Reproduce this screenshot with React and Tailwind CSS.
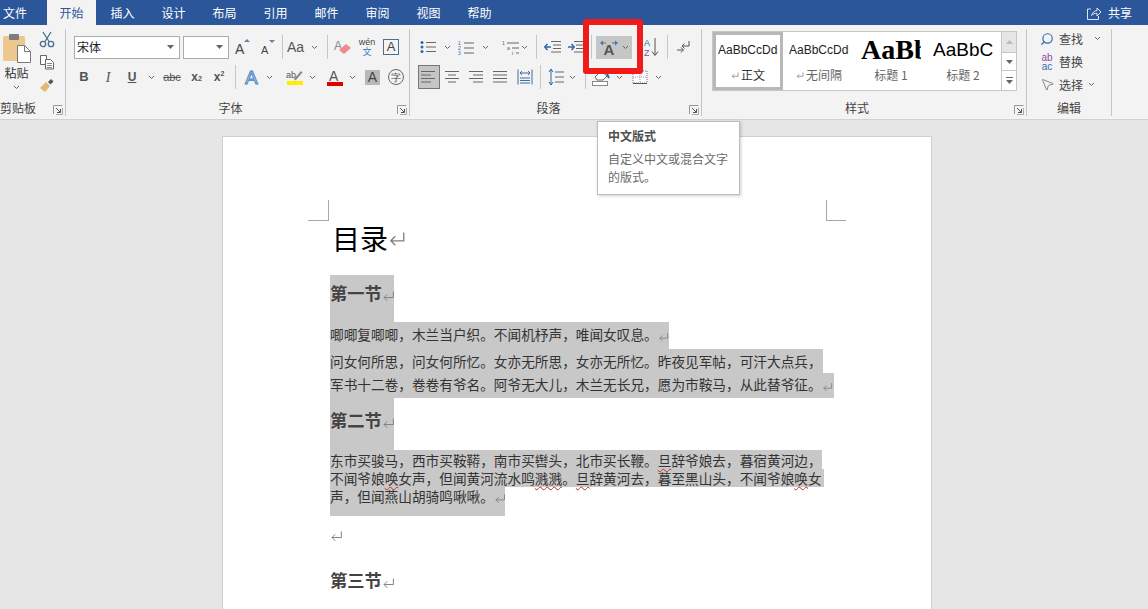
import React from "react";
import { Search, MousePointer2 } from "lucide-react";

const Svg = ({ w = 16, h = 16, children }) => (
  <svg width={w} height={h} viewBox={`0 0 ${w} ${h}`} fill="none" className="block shrink-0">{children}</svg>
);
const I = ({ c = "", children }) => <div className={"flex shrink-0 items-center justify-center " + c}>{children}</div>;
const Caret = ({ c = "" }) => (
  <div className={"flex w-[8px] shrink-0 items-center justify-center " + c}>
    <Svg w={7} h={5}><path d="M1 1l2.5 2.5L6 1" stroke="#666" /></Svg>
  </div>
);
const Launcher = () => (
  <Svg w={10} h={10}>
    <path d="M.5 9V.5H9.5" stroke="#999" /><path d="M3 3l4.5 4.5M7.5 4v3.5H4" stroke="#555" /><path d="M9.5 3v6.5H3" stroke="#aaa" />
  </Svg>
);
const Ret = ({ s = 16, color = "#808080" }) => (
  <svg width={s} height={s} viewBox="0 0 16 16" fill="none" className="inline-block shrink-0 align-middle">
    <path d="M14 3v7.5H2.5M6.5 6.5l-4 4 4 4" stroke={color} strokeWidth="1.2" />
  </svg>
);
const Sep = ({ c = "" }) => <div className={"h-[24px] w-px shrink-0 bg-[#c6c6c6] " + c} />;
const Lines = ({ rows, color = "#666" }) => (
  <Svg w={16} h={14}>{rows.map(([a, b], i) => <path key={i} d={`M${a} ${1.5 + i * 3.5}H${b}`} stroke={color} />)}</Svg>
);
const L = ({ x = 0, y = 13, s = 14, f = "#444", w = 400, fam = "Liberation Sans", children, ...rest }) => (
  <text x={x} y={y} fontSize={s} fill={f} fontWeight={w} fontFamily={fam} {...rest}>{children}</text>
);

function Tabs() {
  return (
    <div className="flex h-[25px] items-center bg-[#2b579a] text-[12px] text-white">
      <div className="w-[47px] pl-[3px]">文件</div>
      <div className="flex h-full w-[49px] items-center justify-center bg-[#f3f3f3] text-[#2b579a]">开始</div>
      {["插入", "设计", "布局", "引用", "邮件", "审阅", "视图", "帮助"].map((t, i) => (
        <div key={t} className={i === 0 ? "ml-[1px] w-[51px] text-center" : "w-[51px] text-center"}>{t}</div>
      ))}
      <div className="ml-auto flex items-center gap-[6px] pr-[16px]">
        <Svg w={16} h={16}><path d="M5 4H1.5v10.5h11V11M5.5 10.500C6.500 7 9 5.500 11 5.500V3l4 4-4 4V8.200c-2 0-4 .6-5.500 2.300z" stroke="#dfe6f2" /></Svg>
        <span>共享</span>
      </div>
    </div>
  );
}

function Group({ c, label, launcher, row = "grid-cols-[1fr_auto_1fr_14px]", children }) {
  return (
    <div className={"mt-[4px] flex h-[87px] shrink-0 flex-col border-r border-[#c6c6c6] " + c}>
      {children}
      <div className={"mt-auto grid h-[16px] items-center text-[12px] leading-[16px] text-[#444] " + row}>
        <div />
        <div className="whitespace-nowrap">{label}</div>
        <div />
        <div className="flex h-full items-end justify-end pb-[1px] pr-[2px]">{launcher && <Launcher />}</div>
      </div>
    </div>
  );
}

function Clipboard() {
  return (
    <Group c="w-[66px]" label="剪贴板" launcher row="grid-cols-[0px_auto_1fr_14px]">
      <div className="flex h-[70px]">
        <div className="flex w-[33px] flex-col items-center pt-[4px] text-[12px] text-[#333]">
          <Svg w={31} h={30}>
            <rect x="2" y="3" width="22" height="25" rx="1.5" fill="#ecc88f" />
            <rect x="8" y="1" width="10" height="6" rx="1" fill="#7d7d7d" />
            <path d="M16.500 12.500h7l6 6v11h-13z" fill="#fff" stroke="#777" />
            <path d="M23.500 12.500v6h6" stroke="#777" />
          </Svg>
          <div className="mt-[1px] leading-[18px]">粘贴</div>
          <Caret c="mt-[3px]" />
        </div>
        <div className="ml-[3px] flex w-[22px] flex-col items-center pt-[1px]">
          <I c="h-[18px]">
            <Svg w={16} h={17}>
              <path d="M4 1l6 9.500M12 1L6 10.500" stroke="#4b6d8f" strokeWidth="1.300" />
              <circle cx="4" cy="13" r="2.700" stroke="#4b6d8f" strokeWidth="1.300" />
              <circle cx="12" cy="13" r="2.700" stroke="#4b6d8f" strokeWidth="1.300" />
            </Svg>
          </I>
          <I c="mt-[5px] h-[18px]">
            <Svg w={16} h={16}><path d="M1.500 1.500h6v9h-6z" fill="#fff" stroke="#666" /><path d="M6.500 5.500h5l3 3v6.500h-8z" fill="#fff" stroke="#666" /><path d="M8 9.500h5M8 11.500h5M8 13.500h5" stroke="#888" /></Svg>
          </I>
          <I c="mt-[5px] h-[18px]">
            <Svg w={16} h={16}><path d="M1 11l6-6 4 4-5 6z" fill="#e3b773" /><path d="M9 5l3-3 2.500 2.500-3 3z" fill="#555" /></Svg>
          </I>
        </div>
      </div>
    </Group>
  );
}

function Font() {
  return (
    <Group c="w-[344px]" label="字体" launcher>
      <div className="mt-[6px] flex h-[24px] items-center text-[#444]">
        <div className="ml-[8px] flex h-[23px] w-[106px] shrink-0 items-center justify-between border border-[#ababab] bg-white pl-[2px] pr-[5px] text-[12px] text-[#222]">
          宋体
          <Svg w={7} h={4}><path d="M0 0h7L3.500 4z" fill="#666" /></Svg>
        </div>
        <div className="ml-[3px] flex h-[23px] w-[46px] shrink-0 items-center justify-end border border-[#ababab] bg-white pr-[5px]">
          <Svg w={7} h={4}><path d="M0 0h7L3.500 4z" fill="#666" /></Svg>
        </div>
        <I c="ml-[6px] w-[16px]"><Svg w={16} h={16}><L y={15} s={14}>A</L><path d="M9 3l3-3 3 3z" fill="#5c84ad" /></Svg></I>
        <I c="ml-[10px] w-[16px]"><Svg w={16} h={16}><L y={15} s={11}>A</L><path d="M8 1h6l-3 3z" fill="#5c84ad" /></Svg></I>
        <Sep c="ml-[5px]" />
        <div className="ml-[4px] w-[18px] font-['Liberation_Sans'] text-[14px] text-[#555]">Aa</div>
        <Caret c="ml-[5px]" />
        <Sep c="ml-[9px]" />
        <I c="ml-[7px] w-[16px]"><Svg w={18} h={18}><L x={0} y={12} s={12} f="#888">A</L><path d="M5 12l7-6 5 4-7 6z" fill="#ed8a8f" /></Svg></I>
        <I c="ml-[7px] h-[24px] w-[18px] flex-col">
          <span className="font-['Liberation_Sans'] text-[9px] leading-[10px] text-[#444]">wén</span>
          <span className="text-[9px] leading-[10px] text-[#2b79c2]">文</span>
        </I>
        <I c="ml-[7px] h-[16px] w-[16px] border border-[#4a6f93] font-['Liberation_Sans'] text-[13px] text-[#444]">A</I>
      </div>
      <div className="mt-[6px] flex h-[24px] items-center font-['Liberation_Sans'] text-[#555]">
        <I c="ml-[6px] w-[24px] text-[13px] font-bold">B</I>
        <I c="w-[24px] font-['Liberation_Serif'] text-[14px] italic">I</I>
        <I c="w-[24px] text-[12px] font-bold underline">U</I>
        <Caret c="ml-[3px]" />
        <I c="ml-[3px] w-[28px] text-[11px] line-through">abc</I>
        <I c="w-[21px] text-[12px] font-bold">x<sub className="text-[7px]">2</sub></I>
        <I c="w-[24px] text-[12px] font-bold">x<sup className="text-[7px]">2</sup></I>
        <Sep c="ml-[4px]" />
        <I c="ml-[7px] w-[20px]"><Svg w={20} h={19}><L x={2} y={16} s={19} f="#dbe8f5" stroke="#4c86c0" strokeWidth="1">A</L></Svg></I>
        <Caret c="ml-[2px]" />
        <I c="ml-[12px] w-[20px]"><Svg w={18} h={18}><L x={0} y={10} s={9} f="#555">ab</L><path d="M8 11l7-8 1.500 1.500-7 8z" fill="#888" /><rect x="1" y="13" width="16" height="4" fill="#ffec00" /></Svg></I>
        <Caret c="ml-[3px]" />
        <I c="ml-[10px] w-[18px]"><Svg w={18} h={18}><L x={3} y={13} s={14} f="#555">A</L><rect x="1" y="14" width="16" height="4" fill="#e00000" /></Svg></I>
        <Caret c="ml-[4px]" />
        <I c="ml-[9px] h-[15px] w-[15px] bg-[#b8b8b8] text-[14px] text-[#444]">A</I>
        <I c="ml-[8px] h-[16px] w-[16px] rounded-full border border-[#666] text-[10px] text-[#444]">字</I>
      </div>
    </Group>
  );
}

function Paragraph() {
  return (
    <Group c="w-[292px]" label="段落" launcher>
      <div className="mt-[6px] flex h-[24px] items-center">
        <I c="ml-[10px] w-[16px]">
          <Svg w={16} h={14}><path d="M6 2.500h10M6 7h10M6 11.500h10" stroke="#666" /><circle cx="2" cy="2.500" r="1.500" fill="#2b6ca8" /><circle cx="2" cy="7" r="1.500" fill="#2b6ca8" /><circle cx="2" cy="11.500" r="1.500" fill="#2b6ca8" /></Svg>
        </I>
        <Caret c="ml-[7px]" />
        <I c="ml-[7px] w-[16px]">
          <Svg w={16} h={15}><L x={0} y={5} s={5} f="#2b6ca8">1</L><L x={0} y={10} s={5} f="#2b6ca8">2</L><L x={0} y={15} s={5} f="#2b6ca8">3</L><path d="M6 3h10M6 8h10M6 13h10" stroke="#666" /></Svg>
        </I>
        <Caret c="ml-[7px]" />
        <I c="ml-[13px] w-[18px]">
          <Svg w={18} h={15}><L x={0} y={5} s={5} f="#2b6ca8">1</L><L x={5} y={10} s={5} f="#2b6ca8">a</L><L x={10} y={15} s={5} f="#2b6ca8">i</L><path d="M5 3h12M10 8h7M14 13h3" stroke="#666" /></Svg>
        </I>
        <Caret />
        <Sep c="ml-[8px]" />
        <I c="ml-[7px] w-[16px]">
          <Svg w={17} h={14}><path d="M7 1.500h10M9 5h8M9 8.500h8M7 12h10" stroke="#666" /><path d="M7 7H1M3.500 4L.8 7l2.700 3" stroke="#2b6ca8" strokeWidth="1.500" /></Svg>
        </I>
        <I c="ml-[7px] w-[16px]">
          <Svg w={17} h={14}><path d="M7 1.500h10M9 5h8M9 8.500h8M7 12h10" stroke="#666" /><path d="M1 7h6M4.500 4l2.700 3-2.700 3" stroke="#2b6ca8" strokeWidth="1.500" /></Svg>
        </I>
        <Sep c="ml-[8px]" />
        <div className="ml-[4px] flex h-[23px] w-[36px] shrink-0 items-center justify-center gap-[3px] bg-[#c6c6c6]">
          <Svg w={20} h={17}><path d="M1 4l3-2.500v5zM19 4l-3-2.500v5z" fill="#3f77ad" /><path d="M4 4h3M13 4h3" stroke="#3f77ad" /><L x={4.500} y={16} s={15} f="#555" w={700}>A</L></Svg>
          <Caret />
        </div>
        <I c="ml-[12px] w-[16px]">
          <Svg w={16} h={20}><L x={0} y={9} s={9} f="#2b6ca8">A</L><L x={0} y={19} s={9} f="#8a4fa3">Z</L><path d="M11 1v17M8 14.500l3 4 3-4" stroke="#555" /></Svg>
        </I>
        <Sep c="ml-[7px]" />
        <I c="ml-[7px] w-[16px]">
          <Svg w={16} h={16}><path d="M14 2v5H7M9.500 4.500L7 7l2.500 2.500" stroke="#555" /><path d="M2 11h6M6 8.500L8.500 11 6 13.500" stroke="#555" /></Svg>
        </I>
      </div>
      <div className="mt-[6px] flex h-[24px] items-center">
        <I c="ml-[8px] h-[24px] w-[22px] border border-[#777] bg-[#c6c6c6]"><Lines rows={[[0, 14], [0, 10], [0, 14], [0, 10]]} /></I>
        <I c="ml-[1px] w-[24px]"><Lines rows={[[0, 14], [3, 11], [0, 14], [3, 11]]} /></I>
        <I c="w-[24px]"><Lines rows={[[0, 14], [4, 14], [0, 14], [4, 14]]} /></I>
        <I c="w-[24px]"><Lines rows={[[0, 14], [0, 14], [0, 14], [0, 14]]} /></I>
        <I c="w-[24px]">
          <Svg w={16} h={16}><path d="M1 .5v15M15 .5v15M3 9h10M3 11.500h10M3 14h10" stroke="#3f6d9e" /><path d="M3 4h10M5 2L3 4l2 2M11 2l2 2-2 2" stroke="#3f6d9e" /></Svg>
        </I>
        <Sep c="ml-[3px]" />
        <I c="ml-[7px] w-[16px]">
          <Svg w={16} h={18}><path d="M3 1v16M1 4l2-3 2 3M1 14l2 3 2-3" stroke="#2b6ca8" /><path d="M7 4h9M7 9h9M7 14h9" stroke="#666" /></Svg>
        </I>
        <Caret c="ml-[4px]" />
        <Sep c="ml-[9px]" />
        <I c="ml-[6px] w-[18px]">
          <Svg w={18} h={18}><path d="M3 9l6-6 6 5-4 4H5z" fill="#fff" stroke="#666" /><path d="M15 6l2 4" stroke="#2b6ca8" strokeWidth="2" /><rect x=".5" y="13.500" width="15" height="4" fill="#fff" stroke="#888" /></Svg>
        </I>
        <Caret c="ml-[5px]" />
        <I c="ml-[9px] w-[16px]">
          <Svg w={16} h={16}><rect x="1" y="2" width="14" height="12" fill="#fff" stroke="#777" strokeDasharray="1 1" /><path d="M8 2v12M1 8h14" stroke="#999" strokeDasharray="1 1" /><path d="M1 14.500h14" stroke="#555" /></Svg>
        </I>
        <Caret c="ml-[6px]" />
      </div>
    </Group>
  );
}

function StyleCell({ sel, sample, name, mark }) {
  return (
    <div className={sel
      ? "flex h-full w-[70px] shrink-0 flex-col items-center overflow-hidden border-[3px] border-[#b8b8b8]"
      : "flex h-full w-[72px] shrink-0 flex-col items-center overflow-hidden pt-[3px]"}>
      <div className="flex h-[30px] w-[60px] shrink-0 items-center overflow-hidden whitespace-nowrap text-[#222]">{sample}</div>
      <div className="flex h-[20px] shrink-0 items-center gap-[2px] text-[12px] text-[#666]">
        {mark && <Ret s={8} color="#666" />}
        {name}
      </div>
    </div>
  );
}

function Styles() {
  return (
    <Group c="w-[325px]" label="样式" launcher>
      <div className="ml-[10px] mt-[2px] flex h-[60px] w-[305px] border border-[#c6c6c6] bg-white">
        <StyleCell sel mark name={<span className="text-[#333]">正文</span>} sample={<span className="font-['Liberation_Sans'] text-[12px]">AaBbCcDdEe</span>} />
        <StyleCell mark name="无间隔" sample={<span className="font-['Liberation_Sans'] text-[12px]">AaBbCcDdEe</span>} />
        <StyleCell name="标题 1" sample={<span className="font-['Liberation_Serif'] text-[28px] font-bold text-black">AaBb</span>} />
        <StyleCell name="标题 2" sample={<span className="font-['Liberation_Sans'] text-[19px] text-black">AaBbCc</span>} />
        <div className="ml-auto flex w-[15px] shrink-0 flex-col border-l border-[#c6c6c6]">
          <I c="h-[20px] bg-[#e6e6e6]"><Svg w={7} h={4}><path d="M0 4h7L3.500 0z" fill="#bbb" /></Svg></I>
          <I c="h-[19px] border-y border-[#c6c6c6]"><Svg w={7} h={4}><path d="M0 0h7L3.500 4z" fill="#666" /></Svg></I>
          <I c="flex-1"><Svg w={7} h={7}><path d="M0 .5h7" stroke="#666" /><path d="M0 3h7L3.500 7z" fill="#666" /></Svg></I>
        </div>
      </div>
    </Group>
  );
}

function Editing() {
  return (
    <Group c="w-[85px]" label="编辑" row="grid-cols-[1fr_auto_1fr_0px]">
      <div className="-mt-[2px] ml-[11px] flex flex-col text-[12px] text-[#444]">
        <div className="flex h-[23px] items-center">
          <I c="w-[18px]"><Search size={14} color="#2b6ca8" strokeWidth={2} className="-scale-x-100" /></I>
          <span className="ml-[3px]">查找</span><Caret c="ml-[10px]" />
        </div>
        <div className="flex h-[23px] items-center">
          <I c="h-[20px] w-[18px] flex-col font-['Liberation_Sans'] text-[10px] leading-[9px]"><span className="text-[#8a4fa3]">ab</span><span className="text-[#2b6ca8]">ac</span></I>
          <span className="ml-[3px]">替换</span>
        </div>
        <div className="flex h-[23px] items-center">
          <I c="w-[18px]"><MousePointer2 size={15} color="#666" strokeWidth={1.2} /></I>
          <span className="ml-[3px]">选择</span><Caret c="ml-[4px]" />
        </div>
      </div>
    </Group>
  );
}

const Wavy = ({ children }) => <span className="underline decoration-[#c42b2b] decoration-wavy decoration-1 underline-offset-2">{children}</span>;

function Doc() {
  const line = "overflow-visible whitespace-nowrap bg-[#c8c8c8] text-[13.67px] text-[#333]";
  const head = "w-[64px] whitespace-nowrap bg-[#c8c8c8] text-[17.3px] font-bold text-[#444]";
  return (
    <div className="ml-[222px] h-[473px] w-[710px] overflow-hidden border-x border-t border-[#cfcfcf] bg-white pt-[63px]">
      <div className="flex justify-between px-[85px]">
        <div className="h-[21px] w-[21px] border-b border-r border-[#a8a8a8]" />
        <div className="h-[21px] w-[20px] border-b border-l border-[#a8a8a8]" />
      </div>
      <div className="pl-[107px]">
        <div className="flex h-[54px] items-start text-[28px] leading-[38px] text-black">
          <span className="ml-[2px] -mt-[2px]">目录</span>
          <span className="flex h-[34px] items-center"><Ret s={18} /></span>
        </div>
        <div className={"h-[47px] leading-[36px] " + head}>第一节<Ret s={13} /></div>
        <div className={"h-[27px] w-[339px] leading-[25px] " + line}>唧唧复唧唧，木兰当户织。不闻机杼声，唯闻女叹息。<Ret s={11} /></div>
        <div className={"h-[24px] w-[493px] leading-[24px] " + line}>问女何所思，问女何所忆。女亦无所思，女亦无所忆。昨夜见军帖，可汗大点兵，</div>
        <div className={"h-[25px] w-[504px] leading-[23px] " + line}>军书十二卷，卷卷有爷名。阿爷无大儿，木兰无长兄，愿为市鞍马，从此替爷征。<Ret s={11} /></div>
        <div className={"h-[52px] leading-[44px] " + head}>第二节<Ret s={13} /></div>
        <div className={"h-[19px] w-[492px] leading-[20px] " + line}>东市买骏马，西市买鞍鞯，南市买辔头，北市买长鞭。<Wavy>旦</Wavy>辞爷娘去，暮宿黄河边，</div>
        <div className={"h-[18px] w-[494px] leading-[18px] " + line}>不闻爷娘<Wavy>唤</Wavy>女声，但闻黄河流水鸣<Wavy>溅溅</Wavy>。<Wavy>旦</Wavy>辞黄河去，暮至黑山头，不闻爷娘<Wavy>唤</Wavy>女</div>
        <div className={"h-[29px] w-[175px] leading-[18px] " + line}>声，但闻燕山胡骑鸣啾啾。<Ret s={12} /></div>
        <div className="flex h-[47px] items-center pb-[9px]"><Ret s={13} /></div>
        <div className="whitespace-nowrap text-[17.3px] font-bold leading-[34px] text-[#444]">第三节<Ret s={13} /></div>
      </div>
    </div>
  );
}

export default function App() {
  return (
    <div className="relative h-[609px] w-[1148px] overflow-hidden bg-[#e6e6e6] font-['Noto_Sans_CJK_SC',sans-serif]">
      <Tabs />
      <div className="flex h-[95px] border-b border-[#d2d2d2] bg-[#f3f3f3]">
        <Clipboard />
        <Font />
        <Paragraph />
        <Styles />
        <Editing />
      </div>
      <div className="pt-[16px]"><Doc /></div>

      <div className="absolute left-[583px] top-[19px] h-[55px] w-[60px] rounded-[3px] border-[6px] border-[#f01c1c]" />
      <div className="absolute left-[597px] top-[121px] h-[74px] w-[143px] border border-[#bdbdbd] bg-white pl-[10px] pt-[5px] text-[12px] shadow-[1px_1px_3px_rgba(0,0,0,0.2)]">
        <div className="font-bold leading-[18px] text-[#505050]">中文版式</div>
        <div className="mt-[5px] leading-[18px] text-[#6a6a6a]">自定义中文或混合文字<br />的版式。</div>
      </div>
    </div>
  );
}
